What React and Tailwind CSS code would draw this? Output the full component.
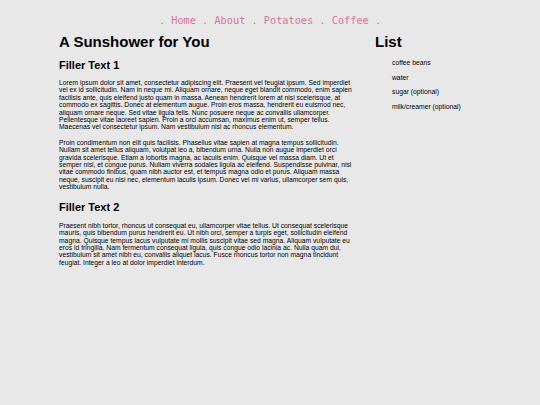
export default function App() {
  const links = ['Home', 'About', 'Potatoes', 'Coffee']
  const list = ['coffee beans', 'water', 'sugar (optional)', 'milk/creamer (optional)']

  return (
    <div className="min-h-[405px] w-[540px] bg-[#e8e8e8] text-black font-['Liberation_Sans',Arial,sans-serif]">
      {/* nav */}
      <nav className="pt-[13px] text-center font-['DejaVu_Sans_Mono',monospace] text-[10.25px] leading-[14px] text-[#9a9a9a]">
        <span>. </span>
        {links.map((l) => (
          <span key={l}>
            <span className="text-[#d9739c]">{l}</span>
            <span> . </span>
          </span>
        ))}
      </nav>

      <div className="flex pl-[59px] pt-[5px]">
        <main className="w-[296px]">
          <h1 className="text-[15px] font-bold leading-[20px]">A Sunshower for You</h1>

          <h2 className="mt-[6px] text-[11px] font-bold leading-[14px]">Filler Text 1</h2>
          <div className="mt-[7px] text-[6.75px] leading-[7.4px] space-y-[8px]">
            <p>
              Lorem ipsum dolor sit amet, consectetur adipiscing elit. Praesent vel feugiat ipsum. Sed imperdiet vel ex id sollicitudin. Nam in neque mi. Aliquam ornare, neque eget blandit commodo, enim sapien facilisis ante, quis eleifend justo quam in massa. Aenean hendrerit lorem at nisi scelerisque, at commodo ex sagittis. Donec at elementum augue. Proin eros massa, hendrerit eu euismod nec, aliquam ornare neque. Sed vitae ligula felis. Nunc posuere neque ac convallis ullamcorper. Pellentesque vitae laoreet sapien. Proin a orci accumsan, maximus enim ut, semper tellus. Maecenas vel consectetur ipsum. Nam vestibulum nisl ac rhoncus elementum.
            </p>
            <p>
              Proin condimentum non elit quis facilisis. Phasellus vitae sapien at magna tempus sollicitudin. Nullam sit amet tellus aliquam, volutpat leo a, bibendum urna. Nulla non augue imperdiet orci gravida scelerisque. Etiam a lobortis magna, ac iaculis enim. Quisque vel massa diam. Ut et semper nisi, et congue purus. Nullam viverra sodales ligula ac eleifend. Suspendisse pulvinar, nisl vitae commodo finibus, quam nibh auctor est, et tempus magna odio et purus. Aliquam massa neque, suscipit eu nisi nec, elementum iaculis ipsum. Donec vel mi varius, ullamcorper sem quis, vestibulum nulla.
            </p>
          </div>

          <h2 className="mt-[9px] text-[11px] font-bold leading-[14px]">Filler Text 2</h2>
          <p className="mt-[8px] text-[6.75px] leading-[7.4px]">
            Praesent nibh tortor, rhoncus ut consequat eu, ullamcorper vitae tellus. Ut consequat scelerisque mauris, quis bibendum purus hendrerit eu. Ut nibh orci, semper a turpis eget, sollicitudin eleifend magna. Quisque tempus lacus vulputate mi mollis suscipit vitae sed magna. Aliquam vulputate eu eros id fringilla. Nam fermentum consequat ligula, quis congue odio lacinia ac. Nulla quam dui, vestibulum sit amet nibh eu, convallis aliquet lacus. Fusce rhoncus tortor non magna tincidunt feugiat. Integer a leo at dolor imperdiet interdum.
          </p>
        </main>

        <aside className="ml-[20px] w-[130px]">
          <h1 className="text-[15px] font-bold leading-[20px]">List</h1>
          <ul className="mt-[7px] pl-[17px] text-[6.75px] leading-[7.4px] space-y-[7.3px]">
            {list.map((i) => (
              <li key={i}>{i}</li>
            ))}
          </ul>
        </aside>
      </div>
    </div>
  )
}
